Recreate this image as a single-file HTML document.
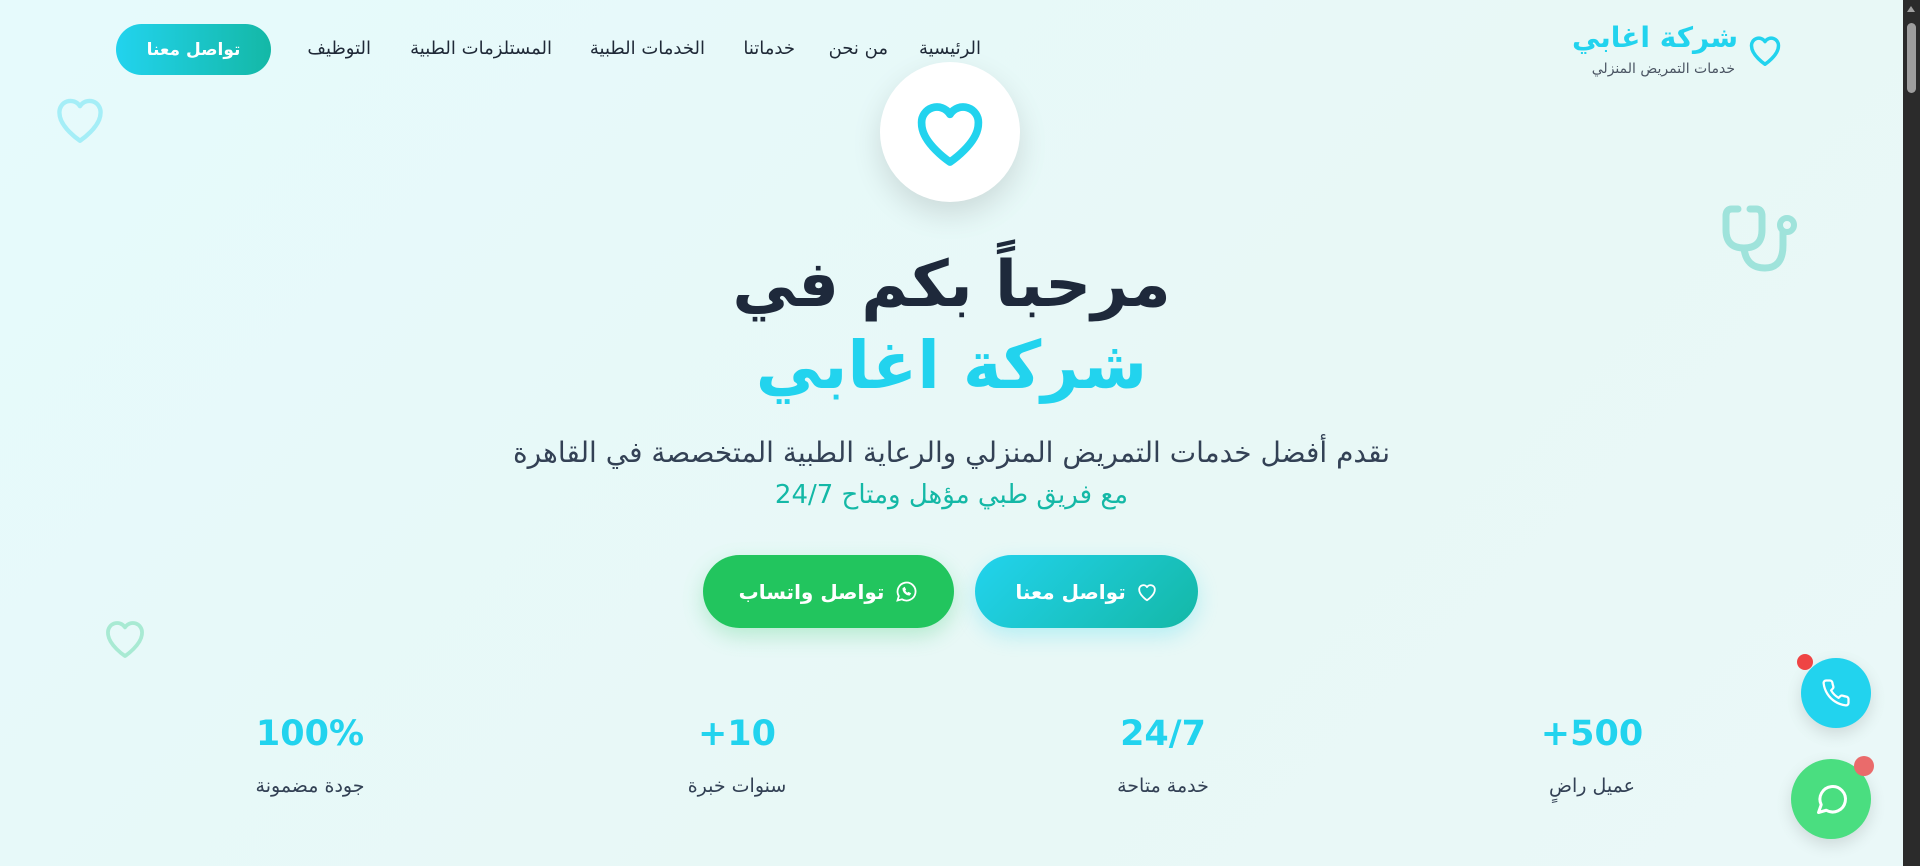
<!DOCTYPE html>
<html><head><meta charset="utf-8"><style>
*{margin:0;padding:0;box-sizing:border-box}
html,body{width:1920px;height:866px;overflow:hidden}
body{background:linear-gradient(135deg,#e6fafc 0%,#e8f8f6 60%,#eaf8f8 100%);font-family:"DejaVu Sans",sans-serif;position:relative;color:#334155}
.sb{position:absolute;right:0;top:0;width:17px;height:866px;background:#2b2b2b}
.sb i{position:absolute;left:4px;top:23px;width:9px;height:70px;border-radius:5px;background:#9e9e9e}
.sb b{position:absolute;left:4px;top:6px;border:4.5px solid transparent;border-bottom:6px solid #a0a0a0;border-top:0}
.a{position:absolute;white-space:nowrap}
.nav{font-size:18px;color:#1f2937;top:38px}
.btn{position:absolute;border-radius:40px;color:#fff;display:flex;align-items:center;justify-content:center;gap:10px}
.num{font-size:35px;font-weight:bold;color:#22d3ee;top:714px;transform:translateX(-50%)}
.lbl{font-size:19px;color:#334155;top:775px;transform:translateX(-50%)}
</style></head><body>
<div class="sb"><b></b><i></i></div>

<svg class="a" style="left:1745px;top:31px" width="40" height="38" viewBox="0 0 24 24" fill="none" stroke="#22d3ee" stroke-width="2.2" stroke-linejoin="round"><path d="M12 21s-8.5-5.6-8.5-11.5A4.6 4.6 0 0 1 12 6.7a4.6 4.6 0 0 1 8.5 2.8C20.5 15.4 12 21 12 21z"/></svg>
<div class="a" style="right:182px;top:21px;font-size:28px;font-weight:bold;color:#22d3ee;direction:rtl">شركة اغابي</div>
<div class="a" style="right:185px;top:61px;font-size:14px;color:#4b5563;direction:rtl">خدمات التمريض المنزلي</div>

<div class="a nav" style="right:939px;direction:rtl">الرئيسية</div>
<div class="a nav" style="right:1032px;direction:rtl">من نحن</div>
<div class="a nav" style="right:1125px;direction:rtl">خدماتنا</div>
<div class="a nav" style="right:1215px;direction:rtl">الخدمات الطبية</div>
<div class="a nav" style="right:1368px;direction:rtl">المستلزمات الطبية</div>
<div class="a nav" style="right:1549px;direction:rtl">التوظيف</div>
<div class="btn" style="left:116px;top:24px;width:155px;height:51px;background:linear-gradient(90deg,#22d3ee,#14b8a6);font-size:17px;font-weight:bold">تواصل معنا</div>

<svg class="a" style="left:50px;top:90px" width="60" height="58" viewBox="0 0 24 24" fill="none" stroke="#a5eef7" stroke-width="1.8" stroke-linejoin="round"><path d="M12 21s-8.5-5.6-8.5-11.5A4.6 4.6 0 0 1 12 6.7a4.6 4.6 0 0 1 8.5 2.8C20.5 15.4 12 21 12 21z"/></svg>
<svg class="a" style="left:100px;top:614px" width="50" height="48" viewBox="0 0 24 24" fill="none" stroke="#a8ead3" stroke-width="1.9" stroke-linejoin="round"><path d="M12 21s-8.5-5.6-8.5-11.5A4.6 4.6 0 0 1 12 6.7a4.6 4.6 0 0 1 8.5 2.8C20.5 15.4 12 21 12 21z"/></svg>
<svg class="a" style="left:1720px;top:200px" width="80" height="75" viewBox="0 0 80 75" fill="none" stroke="#9fe3db" stroke-width="7" stroke-linecap="round"><path d="M18 9 H12 Q6 9 6 16 V30 Q6 48 24 48 Q42 48 42 30 V16 Q42 9 36 9 H30"/><path d="M24 48 Q26 68 45 68 Q63 68 63 45 V32"/><circle cx="67" cy="25" r="7" stroke-width="6"/></svg>

<div class="a" style="left:880px;top:62px;width:140px;height:140px;border-radius:50%;background:#fff;box-shadow:0 12px 30px rgba(0,0,0,.12)"></div>
<svg class="a" style="left:908px;top:92px" width="84" height="80" viewBox="0 0 24 24" fill="none" stroke="#22d3ee" stroke-width="2.3" stroke-linejoin="round"><path d="M12 21s-8.5-5.6-8.5-11.5A4.6 4.6 0 0 1 12 6.7a4.6 4.6 0 0 1 8.5 2.8C20.5 15.4 12 21 12 21z"/></svg>

<div class="a" style="left:0;width:1903px;text-align:center;top:248px;font-size:64px;font-weight:bold;color:#1e293b;direction:rtl">مرحباً بكم في</div>
<div class="a" style="left:0;width:1903px;text-align:center;top:327px;font-size:66px;font-weight:bold;color:#22d3ee;direction:rtl">شركة اغابي</div>
<div class="a" style="left:0;width:1903px;text-align:center;top:436px;font-size:28px;color:#334155;direction:rtl">نقدم أفضل خدمات التمريض المنزلي والرعاية الطبية المتخصصة في القاهرة</div>
<div class="a" style="left:0;width:1903px;text-align:center;top:480px;font-size:26px;color:#14b8a6;direction:rtl">مع فريق طبي مؤهل ومتاح 24/7</div>

<div class="btn" style="left:975px;top:555px;width:223px;height:73px;background:linear-gradient(135deg,#22d3ee,#14b8a6);font-size:20px;font-weight:bold;direction:rtl;box-shadow:0 8px 20px rgba(34,211,238,.25)">
<svg width="22" height="22" viewBox="0 0 24 24" fill="none" stroke="#fff" stroke-width="2" stroke-linejoin="round"><path d="M12 21s-8.5-5.6-8.5-11.5A4.6 4.6 0 0 1 12 6.7a4.6 4.6 0 0 1 8.5 2.8C20.5 15.4 12 21 12 21z"/></svg>تواصل معنا</div>
<div class="btn" style="left:703px;top:555px;width:251px;height:73px;background:#22c55e;font-size:20px;font-weight:bold;direction:rtl;box-shadow:0 8px 20px rgba(34,197,94,.25)">
<svg width="24" height="24" viewBox="0 0 24 24" fill="none" stroke="#fff" stroke-width="1.8"><path d="M3.5 20.5l1.3-4.4A9 9 0 1 1 8 19.3z"/><path d="M9 8.5c0 3.5 3 6.5 6.5 6.5l1-1.5-2-1-1 .8c-1.2-.5-2.3-1.6-2.8-2.8l.8-1-1-2z" fill="#fff" stroke-width="1"/></svg>تواصل واتساب</div>

<div class="a num" style="left:1592px">+500</div><div class="a lbl" style="left:1592px">عميل راضٍ</div>
<div class="a num" style="left:1163px">24/7</div><div class="a lbl" style="left:1163px">خدمة متاحة</div>
<div class="a num" style="left:737px">+10</div><div class="a lbl" style="left:737px">سنوات خبرة</div>
<div class="a num" style="left:310px">100%</div><div class="a lbl" style="left:310px">جودة مضمونة</div>

<div class="a" style="left:1801px;top:658px;width:70px;height:70px;border-radius:50%;background:#22d3ee;box-shadow:0 6px 16px rgba(0,0,0,.12)"></div>
<svg class="a" style="left:1821px;top:678px" width="30" height="30" viewBox="0 0 24 24" fill="none" stroke="#fff" stroke-width="1.8" stroke-linejoin="round"><path d="M22 16.9v3a2 2 0 0 1-2.2 2 19.8 19.8 0 0 1-8.6-3.1 19.5 19.5 0 0 1-6-6A19.8 19.8 0 0 1 2.1 4.2 2 2 0 0 1 4.1 2h3a2 2 0 0 1 2 1.7c.1 1 .4 1.9.7 2.8a2 2 0 0 1-.5 2.1L8.1 9.9a16 16 0 0 0 6 6l1.3-1.3a2 2 0 0 1 2.1-.4c.9.3 1.8.6 2.8.7a2 2 0 0 1 1.7 2z"/></svg>
<div class="a" style="left:1797px;top:654px;width:16px;height:16px;border-radius:50%;background:#ef4444"></div>
<div class="a" style="left:1791px;top:759px;width:80px;height:80px;border-radius:50%;background:#4ade80;box-shadow:0 6px 16px rgba(0,0,0,.12)"></div>
<svg class="a" style="left:1814px;top:781px" width="36" height="36" viewBox="0 0 24 24" fill="none" stroke="#fff" stroke-width="2" stroke-linejoin="round"><path d="M3 21l1.8-5.2A8.5 8.5 0 1 1 8.2 19.5z"/></svg>
<div class="a" style="left:1854px;top:756px;width:20px;height:20px;border-radius:50%;background:#ea6b6b"></div>
</body></html>
